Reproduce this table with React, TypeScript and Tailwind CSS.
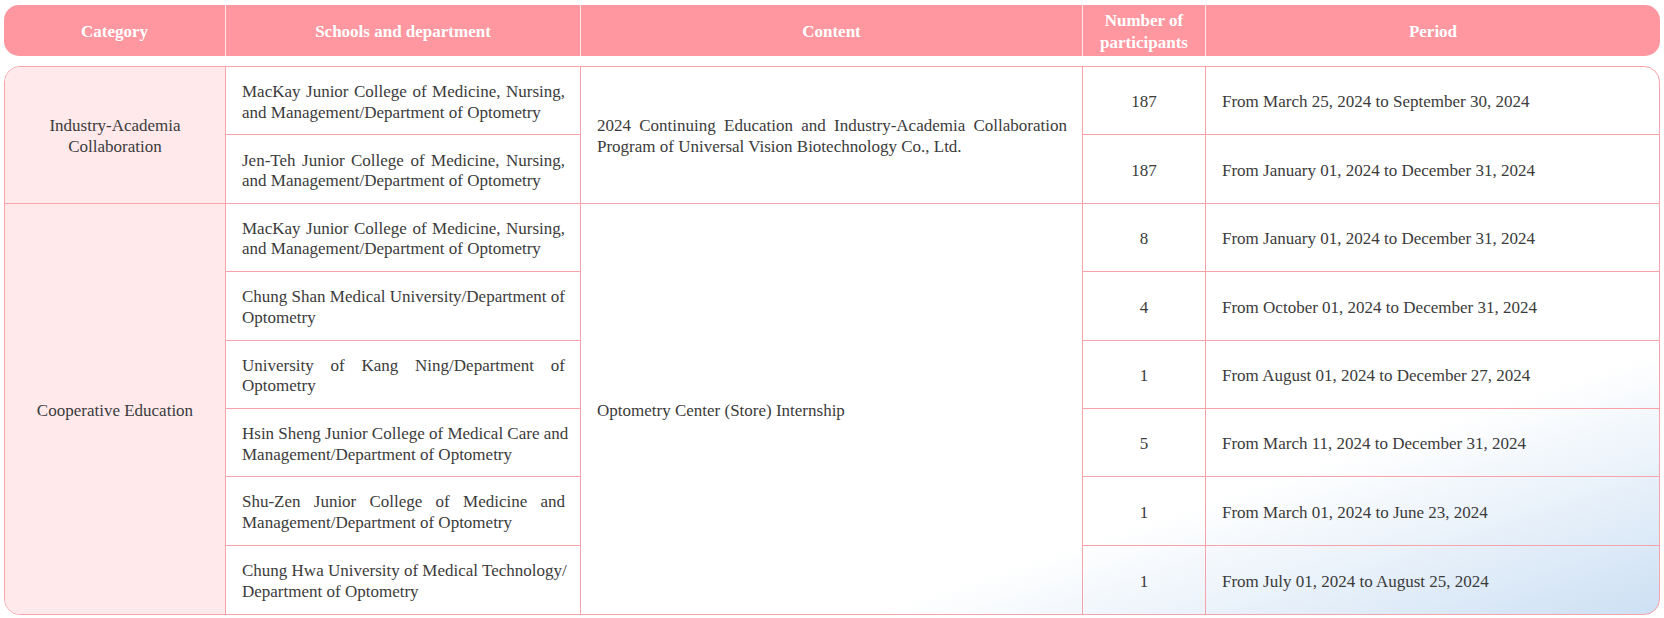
const LINE = "border-[#f8a2aa]";

type Row = {
  school: [string, string];
  count: string;
  period: string;
};

const groups: { category: string; content: [string, string] | [string]; rows: Row[] }[] = [
  {
    category: "Industry-Academia Collaboration",
    content: [
      "2024 Continuing Education and Industry-Academia Collaboration",
      "Program of Universal Vision Biotechnology Co., Ltd.",
    ],
    rows: [
      {
        school: ["MacKay Junior College of Medicine, Nursing,", "and Management/Department of Optometry"],
        count: "187",
        period: "From March 25, 2024 to September 30, 2024",
      },
      {
        school: ["Jen-Teh Junior College of Medicine, Nursing,", "and Management/Department of Optometry"],
        count: "187",
        period: "From January 01, 2024 to December 31, 2024",
      },
    ],
  },
  {
    category: "Cooperative Education",
    content: ["Optometry Center (Store) Internship"],
    rows: [
      {
        school: ["MacKay Junior College of Medicine, Nursing,", "and Management/Department of Optometry"],
        count: "8",
        period: "From January 01, 2024 to December 31, 2024",
      },
      {
        school: ["Chung Shan Medical University/Department of", "Optometry"],
        count: "4",
        period: "From October 01, 2024 to December 31, 2024",
      },
      {
        school: ["University of Kang Ning/Department of", "Optometry"],
        count: "1",
        period: "From August 01, 2024 to December 27, 2024",
      },
      {
        school: ["Hsin Sheng Junior College of Medical Care and", "Management/Department of Optometry"],
        count: "5",
        period: "From March 11, 2024 to December 31, 2024",
      },
      {
        school: ["Shu-Zen Junior College of Medicine and", "Management/Department of Optometry"],
        count: "1",
        period: "From March 01, 2024 to June 23, 2024",
      },
      {
        school: ["Chung Hwa University of Medical Technology/", "Department of Optometry"],
        count: "1",
        period: "From July 01, 2024 to August 25, 2024",
      },
    ],
  },
];

// Two-line text where the first line is stretched edge to edge.
function Justified({ lines }: { lines: string[] }) {
  return (
    <div>
      {lines.map((l, i) => (
        <span
          key={i}
          className={
            i < lines.length - 1
              ? "block whitespace-nowrap text-justify [text-align-last:justify]"
              : "block text-left"
          }
        >
          {l}
        </span>
      ))}
    </div>
  );
}

export default function App() {
  return (
    <div
      className="w-[1664px] h-[618px] bg-white pt-[5px] px-1 text-[17px] leading-[20.5px] text-[#3b3b3b]"
      style={{ fontFamily: '"Liberation Serif", "Times New Roman", serif' }}
    >
      {/* header */}
      <div className="grid grid-cols-[222px_355px_502px_123px_1fr] h-[51px] rounded-[15px] bg-[#ff97a1] text-white font-bold leading-[22px]">
        {["Category", "Schools and department", "Content", "Number of participants", "Period"].map(
          (h, i) => (
            <div
              key={h}
              className={`flex items-center justify-center text-center px-2 pt-[2px] ${
                i < 4 ? "border-r border-[#ffe6e8]" : ""
              }`}
            >
              {h === "Number of participants" ? (
                <span>
                  Number of
                  <br />
                  participants
                </span>
              ) : (
                h
              )}
            </div>
          ),
        )}
      </div>

      {/* body */}
      <div
        className={`mt-[10px] h-[549px] rounded-[16px] border ${LINE} overflow-hidden bg-[linear-gradient(to_bottom_right,#ffffff_0%,#ffffff_76%,#cde0f4_100%)]`}
      >
        <div className="grid h-full grid-cols-[221px_355px_502px_123px_1fr] grid-rows-[repeat(8,minmax(0,1fr))]">
          {groups.map((g, gi) => {
            const last = gi === groups.length - 1;
            const span = g.rows.length === 2 ? "row-span-2" : "row-span-6";
            return g.rows.map((r, ri) => {
              const lastRow = last && ri === g.rows.length - 1;
              const bottom = lastRow ? "" : "border-b";
              return [
                ri === 0 && (
                  <div
                    key={`c${gi}`}
                    className={`${span} flex items-center justify-center text-center px-6 pt-[4px] bg-[#ffe9eb] border-r ${LINE} ${
                      last ? "" : "border-b"
                    }`}
                  >
                    {g.category}
                  </div>
                ),
                <div
                  key={`s${gi}${ri}`}
                  className={`flex items-center pl-4 pr-[15px] pt-[4px] border-r ${bottom} ${LINE}`}
                >
                  <div className="w-full">
                    <Justified lines={r.school} />
                  </div>
                </div>,
                ri === 0 && (
                  <div
                    key={`t${gi}`}
                    className={`${span} flex items-center pl-4 pr-[15px] pt-[4px] border-r ${LINE} ${last ? "" : "border-b"}`}
                  >
                    <div className="w-full">
                      <Justified lines={g.content} />
                    </div>
                  </div>
                ),
                <div
                  key={`n${gi}${ri}`}
                  className={`flex items-center justify-center pt-[4px] border-r ${bottom} ${LINE}`}
                >
                  {r.count}
                </div>,
                <div key={`p${gi}${ri}`} className={`flex items-center px-4 pt-[4px] ${bottom} ${LINE}`}>
                  {r.period}
                </div>,
              ];
            });
          })}
        </div>
      </div>
    </div>
  );
}
